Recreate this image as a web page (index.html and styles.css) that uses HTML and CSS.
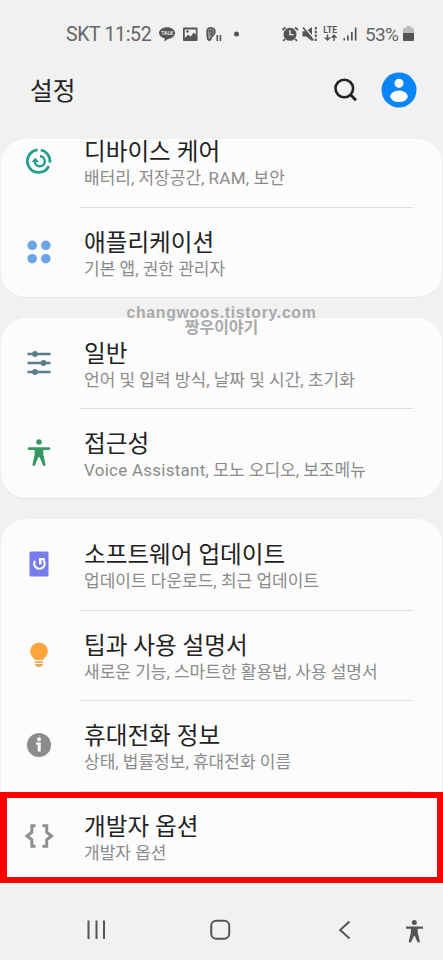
FILE: index.html
```html
<!DOCTYPE html>
<html lang="ko">
<head>
<meta charset="utf-8">
<title>설정</title>
<link rel="stylesheet" href="styles.css">
</head>
<body>
<div class="phone">
  <header class="status">
    <span class="carrier">SKT 11:52</span>
    <svg class="status-icons" width="85" height="24" viewBox="0 0 85 24" fill="#555">
      <path d="M8 5.300c4.600 0 8 2.500 8 5.800s-3.400 5.800-7 5.800l-3.700 2.700.5-3.200C2.300 15.600 0 13.700 0 11.100 0 7.800 3.500 5.300 8 5.300z"/>
      <text x="2.200" y="13" class="talk">TALK</text>
      <path fill-rule="evenodd" d="M25 5.500h12.500q1 0 1 1v11.500q0 1-1 1H25q-1 0-1-1V6.500q0-1 1-1zm.8 2v8.500l3.500-3.500 2.200 2.200 3.300-4.200 2 2.500V7.500z"/>
      <circle cx="28.500" cy="9.500" r="1.300"/>
      <path d="M48 10c-.4-6 8.400-5.500 7.900.2-.2 3.200-3.400 3.200-3.900 6.300-.4 2.400-3.500 2-3.500-.4zM50.400 10.500c.1-3.300 3.300-2.800 3 0-.2 1.600-2 1-2.300 2.700" fill="#999" stroke="#555" stroke-width="1.600"/>
      <path d="M57.500 13h1.600v6h-1.600zM60.600 13h1.600v6h-1.600z"/>
      <circle cx="77.500" cy="12" r="2.500"/>
    </svg>
    <svg class="signals" width="79" height="24" viewBox="0 0 79 24" fill="#555">
      <path d="M1.500 8 4.500 5.500M14 5.500 17 8M4 17l-1.800 2M14.200 17l1.800 2" stroke="#555" stroke-width="1.800"/>
      <circle cx="9" cy="12.300" r="6.500"/><path d="M9 8.300v4.300h3.500" fill="none" stroke="#f1f1f1" stroke-width="1.400"/>
      <path d="M21.500 9.300h3.800l5.700-4.300v14l-5.700-4.500h-3.800z"/><path d="M22.800 4.500 33.300 17" stroke="#f1f1f1" stroke-width="1.500"/><path d="M22 5.500 32.500 18.500" stroke="#555" stroke-width="1.600"/><path d="M34.800 5v14" stroke="#555" stroke-width="2" stroke-dasharray="2.500 1.300"/>
      <text x="42.300" y="11.300" class="lte">LTE</text>
      <path d="M46.500 12.500v5M44 15.500l2.500 2.500 2.500-2.500M53 19v-5M50.500 15.800l2.500-2.500 2.500 2.500" fill="none" stroke="#555" stroke-width="1.500"/>
      <path d="M62.500 16h1.500v2.500h-1.500zM66 13.500h1.700v5H66zM70 10h1.700v8.500H70zM73.800 5.500h1.700v13h-1.700z"/>
    </svg>
    <span class="percent">53%</span>
    <svg class="battery" width="11" height="16" viewBox="0 0 11 16"><path d="M3 0h5v2h2q1 0 1 1v5H0V3q0-1 1-1h2z" fill="#bcbcbc"/><path d="M0 7h11v7q0 1-1 1H1q-1 0-1-1z" fill="#555"/></svg>
  </header>

  <div class="titlebar">
    <h1>설정</h1>
    <svg class="search" width="24" height="24" viewBox="0 0 24 24" fill="none" stroke="#222"><circle cx="11.300" cy="10.500" r="8.800" stroke-width="2.600"/><path d="m17.300 16.500 5.700 5.700" stroke-width="2.800"/></svg>
    <svg class="avatar" width="36" height="36" viewBox="0 0 36 36"><circle cx="18" cy="18" r="17.500" fill="#0a85f5"/><circle cx="18" cy="11.300" r="4.500" fill="#fcfcfc"/><ellipse cx="18" cy="24.300" rx="8.800" ry="5.800" fill="#fcfcfc"/></svg>
  </div>

  <main class="list">
    <section class="card card-clipped">
      <div class="row">
        <svg class="icon" viewBox="0 0 32 32" fill="none" stroke="#219f8a"><path d="M17.800 5a11.300 11.300 0 0 1 9 12.600M25.800 21.200A11.300 11.300 0 1 1 14.600 4.900" stroke-width="2.800"/><path d="M17 11.300a5 5 0 1 1-5.200 5.500" stroke-width="2.400"/><path d="m9.500 16.600 2.700-3.300 2.900 3.200z" fill="#219f8a" stroke-width="1"/></svg>
        <div class="text"><h2>디바이스 케어</h2><p>배터리, 저장공간, <span class="latin">RAM,</span> 보안</p></div>
      </div>
      <div class="row">
        <svg class="icon" viewBox="0 0 32 32" fill="#6ba5e7"><circle cx="9.200" cy="9.300" r="4.800"/><circle cx="22.800" cy="9.300" r="4.800"/><circle cx="9.200" cy="22.700" r="4.800"/><circle cx="22.800" cy="22.700" r="4.800"/></svg>
        <div class="text"><h2>애플리케이션</h2><p>기본 앱, 권한 관리자</p></div>
      </div>
    </section>

    <section class="card">
      <div class="row">
        <svg class="icon" viewBox="0 0 32 32" fill="#587e8c"><path d="M4.500 5.800h23v2.500h-23zM4.500 14.800h23v2.500h-23zM4.500 23.800h23v2.500h-23z"/><circle cx="12" cy="7" r="2.900"/><circle cx="20.500" cy="16" r="2.900"/><circle cx="12" cy="25" r="2.900"/></svg>
        <div class="text"><h2>일반</h2><p>언어 및 입력 방식, 날짜 및 시간, 초기화</p></div>
      </div>
      <div class="row">
        <svg class="icon" viewBox="0 0 32 32" fill="#379760"><circle cx="16" cy="5" r="2.800"/><path d="M6 10.200h20q1.400.2 1.400 1.400T26 13h-5.700v4.300l2.200 10.200q0 1.500-1.300 1.500-1 0-1.400-1.200L16.500 20h-1l-3.300 7.800Q11.800 29 10.800 29q-1.300 0-1.300-1.500l2.200-10.200V13H6q-1.400-.2-1.400-1.400T6 10.200z"/></svg>
        <div class="text"><h2>접근성</h2><p><span class="latin">Voice Assistant,</span> 모노 오디오, 보조메뉴</p></div>
      </div>
    </section>

    <section class="card card-open">
      <div class="row">
        <svg class="icon" viewBox="0 0 32 32"><rect x="6.500" y="3.500" width="19" height="25" rx="1.500" fill="#777ced"/><path d="M12 12.800a5.200 5.200 0 1 0 8.400-.6" fill="none" stroke="#fff" stroke-width="2.200"/><path d="M16 10h5.800v2.200h-3.300v4.300H16z" fill="#fff"/></svg>
        <div class="text"><h2>소프트웨어 업데이트</h2><p>업데이트 다운로드, 최근 업데이트</p></div>
      </div>
      <div class="row">
        <svg class="icon" viewBox="0 0 32 32" fill="#fda53c"><path d="M16 3.500a8.800 8.800 0 0 1 8.800 8.800c0 4.200-2.700 5.400-4.800 8.800h-8c-2.100-3.400-4.800-4.600-4.800-8.800A8.800 8.800 0 0 1 16 3.500z"/><path d="M12 22.300h8v1.700h-8zM12 25h8q-.5 3-4 3t-4-3z" fill="#eaa658"/></svg>
        <div class="text"><h2>팁과 사용 설명서</h2><p>새로운 기능, 스마트한 활용법, 사용 설명서</p></div>
      </div>
      <div class="row">
        <svg class="icon" viewBox="0 0 32 32"><circle cx="16" cy="16" r="12" fill="#8c8c8c"/><circle cx="16" cy="10.300" r="2" fill="#fff"/><path d="M13 13.500h4.700v9h-3v-6.800H13z" fill="#fff"/></svg>
        <div class="text"><h2>휴대전화 정보</h2><p>상태, 법률정보, 휴대전화 이름</p></div>
      </div>
      <div class="row row-marked">
        <svg class="icon" viewBox="0 0 32 32" fill="none" stroke="#8f8f8f" stroke-width="3"><path d="M12.500 5.700H8.800v6.500L4 16l4.800 3.800v6.500h3.700M19.500 5.700h4.200v6.500L28.500 16l-4.800 3.800v6.500h-4.200"/></svg>
        <div class="text"><h2>개발자 옵션</h2><p>개발자 옵션</p></div>
      </div>
    </section>
    <div class="watermark"><span class="site">changwoos.tistory.com</span><span class="blog">짱우이야기</span></div>
  </main>

  <nav class="navbar">
    <svg width="443" height="78" viewBox="0 0 443 78" fill="none" stroke="#555" stroke-width="2">
      <path d="M88.500 38.500v18.500M96.500 38.500v18.500M104 38.500v18.500"/>
      <rect x="211.200" y="38.800" width="18" height="18" rx="5"/>
      <path d="m349.500 39.500-9.300 8.500 9.300 8.500"/>
      <g fill="#555" stroke="none"><circle cx="414.300" cy="40.500" r="2.500"/><path d="M406 44.500h17v2.300h-5.300v3.700l2.300 9.500-2.300.5-3-6.500h-.8l-3 6.500-2.300-.5 2.300-9.500v-3.700H406z"/></g>
    </svg>
  </nav>
</div>
</body>
</html>
```
FILE: styles.css
```css
*, *::before, *::after { box-sizing: border-box; }
body { margin: 0; background: #f1f1f1; font-family: Roboto, "Noto Sans CJK KR", sans-serif; }
h1, h2, p { margin: 0; font-weight: 400; white-space: nowrap; }
svg { display: block; flex: none; }
.phone { width: 443px; height: 960px; display: flex; flex-direction: column; overflow: hidden; }

.status { height: 56px; padding: 12px 29px 0 66px; display: flex; align-items: center; color: #666; }
.carrier { width: 85px; font-size: 19.500px; letter-spacing: -.35px; white-space: nowrap; }
.status-icons { margin-left: 8px; }
.talk { font: 700 5px Roboto, sans-serif; fill: #e5e5e5; }
.signals { margin-left: 37px; }
.lte { font: 700 8.500px Roboto, sans-serif; }
.percent { margin-left: 5px; width: 34px; font-size: 19px; letter-spacing: -.7px; }
.battery { margin-left: 5px; }

.titlebar { height: 83px; padding: 0 26px 15px 30px; display: flex; align-items: center; }
h1 { flex: 1; padding-top: 3px; font-size: 24.700px; line-height: 36px; color: #252525; }
.search { margin-right: 24px; }

.list { position: relative; height: 743px; display: flex; flex-direction: column; gap: 20px; }
.card { height: 181px; flex: none; margin: 0 1px; background: #fcfcfc; border-radius: 25px; border-bottom: 1px solid #e4e4e4; overflow: hidden; }
.card-clipped { height: 159px; display: flex; flex-direction: column; justify-content: flex-end; }
.card-open { height: 363px; overflow: visible; border-bottom: 0; border-radius: 25px 25px 0 0; }
.row { position: relative; height: 90.700px; flex: none; padding: 22px 29px 0 22px; display: flex; gap: 29px; }
.card-clipped .row, .card:not(.card-open) .row { height: 90.300px; }
.row + .row .text::before { content: ""; position: absolute; top: 0; left: 79px; right: 29px; height: 1px; background: #dedede; }
.icon { width: 32px; height: 32px; margin-top: 7px; }
h2 { font-size: 23.600px; line-height: 28px; color: #222; }
p { font-size: 17px; line-height: 24px; color: #8b8b8b; }
.latin { letter-spacing: .25px; }
.row-marked::after { content: ""; position: absolute; top: 1px; left: -1px; right: -1px; height: 91px; border: 6px solid #fe0000; border-left-width: 7px; }

.watermark { position: absolute; top: 166px; left: 0; width: 443px; display: flex; flex-direction: column; align-items: center; color: #aaa; font-weight: 700; font-size: 16px; line-height: 15px; }
.site { font-family: "Liberation Sans", sans-serif; font-size: 15.800px; letter-spacing: .7px; }
.blog { font-size: 16px; }

.navbar { height: 78px; }
```
